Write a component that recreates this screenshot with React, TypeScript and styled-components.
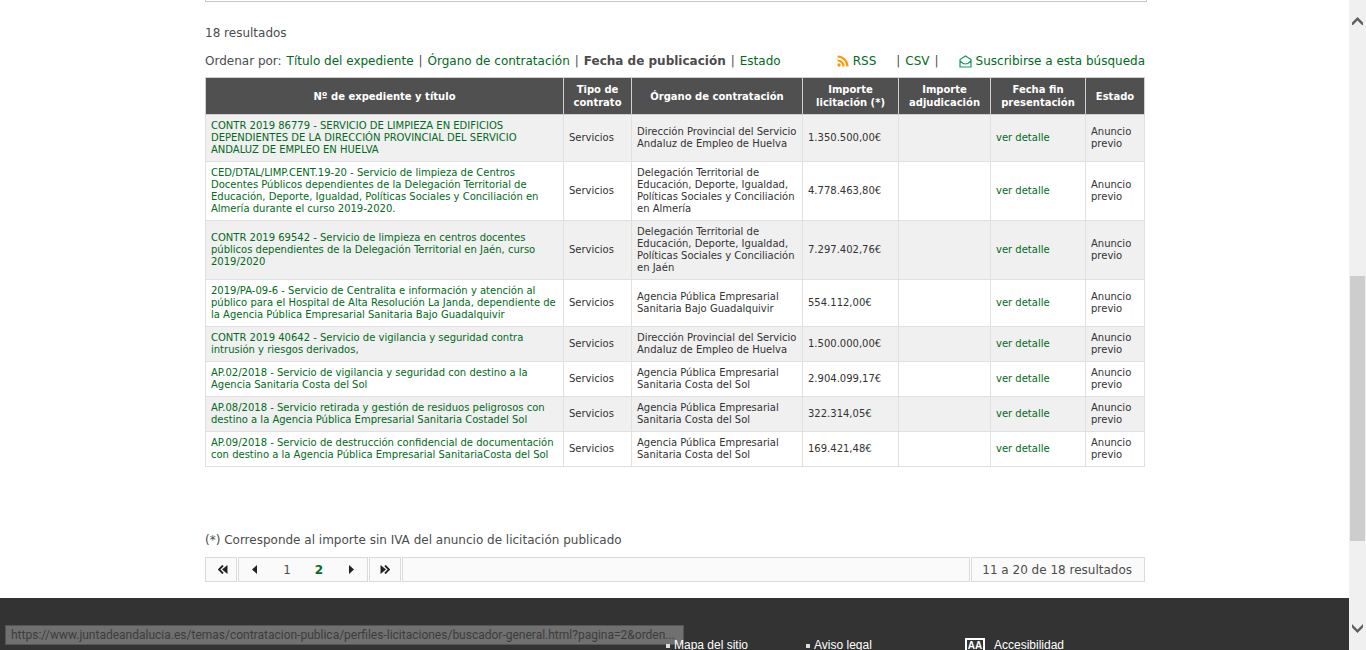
import React from "react";
import styled, { createGlobalStyle } from "styled-components";

const GlobalStyle = createGlobalStyle`
  * { box-sizing: border-box; }
  body {
    margin: 0;
    background: #fff;
    color: #4c4c4c;
    font: 12px/16px Verdana, "DejaVu Sans", sans-serif;
  }
  a { color: #006b20; text-decoration: none; }
  button { font: inherit; }
`;

const Window = styled.div`
  display: grid;
  grid-template-columns: minmax(0, 1fr) 17px;
  height: 100vh;
  overflow: hidden;
`;

const Page = styled.div`
  position: relative;
  display: flex;
  flex-direction: column;
  overflow: hidden;
`;

const Content = styled.main`
  flex: none;
  width: 100%;
  max-width: 941px;
  margin: 0 auto;
  padding: 0 0 16px 1px;
`;

const SearchPanelEnd = styled.div`
  height: 2px;
  margin-right: -2px;
  border: 1px solid #c8c8c8;
  border-top: 0;
`;

const ResultCount = styled.p`
  margin: 23px 0 12px;
`;

const ListBar = styled.div`
  display: flex;
  justify-content: space-between;
  align-items: center;
  margin: 0 0 8px;
  white-space: nowrap;
`;

const SortLinks = styled.div`
  display: flex;
  gap: 5px;
`;

const ExportLinks = styled.div`
  display: flex;
  align-items: center;
`;

const ExportLink = styled.a`
  display: flex;
  align-items: center;
  gap: 4px;
`;

const Divider = styled.span<{ $before: number; $after: number }>`
  margin: 0 ${(p) => p.$after}px 0 ${(p) => p.$before}px;
`;

const ResultsTable = styled.table`
  width: 100%;
  table-layout: fixed;
  border-collapse: collapse;
  font-size: 10px;
  line-height: 12px;
`;

const HeadCell = styled.th`
  height: 36px;
  padding: 5px 4px;
  border: 1px solid #d0d0d0;
  background: #505050;
  color: #fff;
  font-weight: bold;
  line-height: 13px;
`;

const Row = styled.tr`
  &:nth-child(odd) { background: #f0f0f0; }
`;

const Cell = styled.td`
  padding: 5px 4px 5px 5px;
  border: 1px solid #e0e0e0;
  color: #333;
`;

const Note = styled.p`
  margin: 65px 0 9px;
`;

const Pager = styled.nav`
  display: flex;
  gap: 1px;
  height: 25px;
`;

const PagerBox = styled.div<{ $grow?: boolean; $wide?: boolean }>`
  display: flex;
  flex: ${(p) => (p.$grow ? "1" : "none")};
  align-items: center;
  padding: 0 ${(p) => (p.$wide ? "12px 0 10px" : "0")};
  border: 1px solid #dadada;
  background: #fafafa;
  white-space: nowrap;
`;

const PageButton = styled.button<{ $current?: boolean }>`
  display: flex;
  align-items: center;
  justify-content: center;
  width: 32px;
  height: 23px;
  padding: 0;
  border: 0;
  background: transparent;
  color: ${(p) => (p.$current ? "#006b20" : "#4c4c4c")};
  font-weight: ${(p) => (p.$current ? "bold" : "normal")};
`;

const EndButton = styled(PageButton)<{ $inset?: number }>`
  width: 30px;
  padding-left: ${(p) => p.$inset ?? 0}px;
`;

const Footer = styled.footer`
  flex: 1 0 52px;
  background: #333;
`;

const FooterLinks = styled.div`
  position: relative;
  z-index: 1;
  display: flex;
  width: 100%;
  max-width: 941px;
  margin: 0 auto;
  padding: 38px 0 0 462px;
  font: 12px/14px Arial, "Liberation Sans", sans-serif;
`;

const FooterLink = styled.a<{ $width: number }>`
  display: flex;
  align-items: center;
  gap: 4px;
  width: ${(p) => p.$width}px;
  height: 18px;
  color: #fff;
  white-space: nowrap;
`;

const Bullet = styled.span`
  width: 4px;
  height: 4px;
  margin-top: 2px;
  background: #ddd;
`;

const AccessBadge = styled.span`
  flex: none;
  width: 20px;
  height: 16px;
  margin: 2px 5px 0 0;
  border: 2px solid #fff;
  font: bold 10px/12px Arial, "Liberation Sans", sans-serif;
  text-align: center;
`;

const LinkStatus = styled.div`
  position: absolute;
  left: 5px;
  bottom: 5px;
  width: 679px;
  height: 20px;
  padding: 0 5px;
  overflow: hidden;
  border: 1px solid #555;
  background: #707070;
  color: #3c3c3c;
  font: 12px/18px "Segoe UI", Roboto, sans-serif;
  white-space: nowrap;
`;

const ScrollTrack = styled.div`
  display: flex;
  flex-direction: column;
  align-items: center;
  padding: 14px 0 16px;
  background: #f0f0f0;
`;

const ScrollThumb = styled.div`
  width: 15px;
  height: 265px;
  margin: 251px 0 auto;
  background: #cdcdcd;
`;

const columns = [
  { title: "Nº de expediente y título", width: 358 },
  { title: "Tipo de contrato", width: 68 },
  { title: "Órgano de contratación", width: 171 },
  { title: "Importe licitación (*)", width: 96 },
  { title: "Importe adjudicación", width: 92 },
  { title: "Fecha fin presentación", width: 95 },
  { title: "Estado", width: 59 },
];

const results = [
  { title: "CONTR 2019 86779 - SERVICIO DE LIMPIEZA EN EDIFICIOS DEPENDIENTES DE LA DIRECCIÓN PROVINCIAL DEL SERVICIO ANDALUZ DE EMPLEO EN HUELVA", body: "Dirección Provincial del Servicio Andaluz de Empleo de Huelva", amount: "1.350.500,00€" },
  { title: "CED/DTAL/LIMP.CENT.19-20 - Servicio de limpieza de Centros Docentes Públicos dependientes de la Delegación Territorial de Educación, Deporte, Igualdad, Políticas Sociales y Conciliación en Almería durante el curso 2019-2020.", body: "Delegación Territorial de Educación, Deporte, Igualdad, Políticas Sociales y Conciliación en Almería", amount: "4.778.463,80€" },
  { title: "CONTR 2019 69542 - Servicio de limpieza en centros docentes públicos dependientes de la Delegación Territorial en Jaén, curso 2019/2020", body: "Delegación Territorial de Educación, Deporte, Igualdad, Políticas Sociales y Conciliación en Jaén", amount: "7.297.402,76€" },
  { title: "2019/PA-09-6 - Servicio de Centralita e información y atención al público para el Hospital de Alta Resolución La Janda, dependiente de la Agencia Pública Empresarial Sanitaria Bajo Guadalquivir", body: "Agencia Pública Empresarial Sanitaria Bajo Guadalquivir", amount: "554.112,00€" },
  { title: "CONTR 2019 40642 - Servicio de vigilancia y seguridad contra intrusión y riesgos derivados,", body: "Dirección Provincial del Servicio Andaluz de Empleo de Huelva", amount: "1.500.000,00€" },
  { title: "AP.02/2018 - Servicio de vigilancia y seguridad con destino a la Agencia Sanitaria Costa del Sol", body: "Agencia Pública Empresarial Sanitaria Costa del Sol", amount: "2.904.099,17€" },
  { title: "AP.08/2018 - Servicio retirada y gestión de residuos peligrosos con destino a la Agencia Pública Empresarial Sanitaria Costadel Sol", body: "Agencia Pública Empresarial Sanitaria Costa del Sol", amount: "322.314,05€" },
  { title: "AP.09/2018 - Servicio de destrucción confidencial de documentación con destino a la Agencia Pública Empresarial SanitariaCosta del Sol", body: "Agencia Pública Empresarial Sanitaria Costa del Sol", amount: "169.421,48€" },
];

const RssIcon = () => (
  <svg width="12" height="12" viewBox="0 0 12 12" fill="none" stroke="#f90" strokeWidth="2.2">
    <circle cx="2" cy="10" r="1.7" fill="#f90" stroke="none" />
    <path d="M0.5 5.5a6 6 0 0 1 6 6M0.5 1.5a10 10 0 0 1 10 10" />
  </svg>
);

const MailIcon = () => (
  <svg width="13" height="13" viewBox="0 0 13 13" fill="none" stroke="#149a5a" strokeWidth="1.2">
    <path d="M1 4.600v7.400h11V4.600L6.500 1 1 4.600ZM1 5.800C3 8 5 9 6.500 9S10 8 12 5.800" />
  </svg>
);

const Arrow = ({ double, flip }: { double?: boolean; flip?: boolean }) => (
  <svg width="10" height="9" viewBox="0 0 10 9" transform={flip ? "scale(-1 1)" : undefined}>
    {double ? (
      <>
        <path d="M5 0.500 1 4.500 5 8.500" fill="none" stroke="#222" strokeWidth="1.800" />
        <path d="M9.500 0v9L4 4.500Z" fill="#222" />
      </>
    ) : (
      <path d="M7 0v9L2 4.500Z" fill="#222" />
    )}
  </svg>
);

const ScrollArrow = ({ down }: { down?: boolean }) => (
  <svg width="11" height="11" viewBox="0 0 11 11">
    <path
      d={down ? "M0 1 5.500 6.500 11 1V4.500L5.500 10 0 4.500Z" : "M0 8.500 5.500 3 11 8.500V12L5.500 6.500 0 12Z"}
      fill="#606060"
    />
  </svg>
);

export default function App() {
  return (
    <Window>
      <GlobalStyle />
      <Page>
        <Content>
          <SearchPanelEnd />
          <ResultCount>18 resultados</ResultCount>
          <ListBar>
            <SortLinks>
              <span>Ordenar por:</span>
              <a href="#titulo">Título del expediente</a>
              <span>|</span>
              <a href="#organo">Órgano de contratación</a>
              <span>|</span>
              <strong>Fecha de publicación</strong>
              <span>|</span>
              <a href="#estado">Estado</a>
            </SortLinks>
            <ExportLinks>
              <ExportLink href="#rss"><RssIcon />RSS</ExportLink>
              <Divider $before={20} $after={5}>|</Divider>
              <ExportLink href="#csv">CSV</ExportLink>
              <Divider $before={5} $after={20}>|</Divider>
              <ExportLink href="#suscribirse"><MailIcon />Suscribirse a esta búsqueda</ExportLink>
            </ExportLinks>
          </ListBar>
          <ResultsTable>
            <colgroup>
              {columns.map((c) => <col key={c.title} width={c.width} />)}
            </colgroup>
            <thead>
              <tr>{columns.map((c) => <HeadCell key={c.title} scope="col">{c.title}</HeadCell>)}</tr>
            </thead>
            <tbody>
              {results.map((r) => (
                <Row key={r.title}>
                  <Cell><a href="#expediente">{r.title}</a></Cell>
                  <Cell>Servicios</Cell>
                  <Cell>{r.body}</Cell>
                  <Cell>{r.amount}</Cell>
                  <Cell />
                  <Cell><a href="#detalle">ver detalle</a></Cell>
                  <Cell>Anuncio previo</Cell>
                </Row>
              ))}
            </tbody>
          </ResultsTable>
          <Note>(*) Corresponde al importe sin IVA del anuncio de licitación publicado</Note>
          <Pager aria-label="Paginación">
            <PagerBox><EndButton $inset={4} aria-label="Primera página"><Arrow double /></EndButton></PagerBox>
            <PagerBox>
              <PageButton aria-label="Página anterior"><Arrow /></PageButton>
              <PageButton>1</PageButton>
              <PageButton $current aria-current="page">2</PageButton>
              <PageButton aria-label="Página siguiente"><Arrow flip /></PageButton>
            </PagerBox>
            <PagerBox><EndButton aria-label="Última página"><Arrow double flip /></EndButton></PagerBox>
            <PagerBox $grow />
            <PagerBox $wide>11 a 20 de 18 resultados</PagerBox>
          </Pager>
        </Content>
        <Footer>
          <FooterLinks>
            <FooterLink href="#mapa" $width={140}><Bullet />Mapa del sitio</FooterLink>
            <FooterLink href="#aviso" $width={159}><Bullet />Aviso legal</FooterLink>
            <FooterLink href="#accesibilidad" $width={120}><AccessBadge>AA</AccessBadge>Accesibilidad</FooterLink>
          </FooterLinks>
        </Footer>
        <LinkStatus>
          https://www.juntadeandalucia.es/temas/contratacion-publica/perfiles-licitaciones/buscador-general.html?pagina=2&amp;orden...
        </LinkStatus>
      </Page>
      <ScrollTrack aria-hidden="true">
        <ScrollArrow />
        <ScrollThumb />
        <ScrollArrow down />
      </ScrollTrack>
    </Window>
  );
}
